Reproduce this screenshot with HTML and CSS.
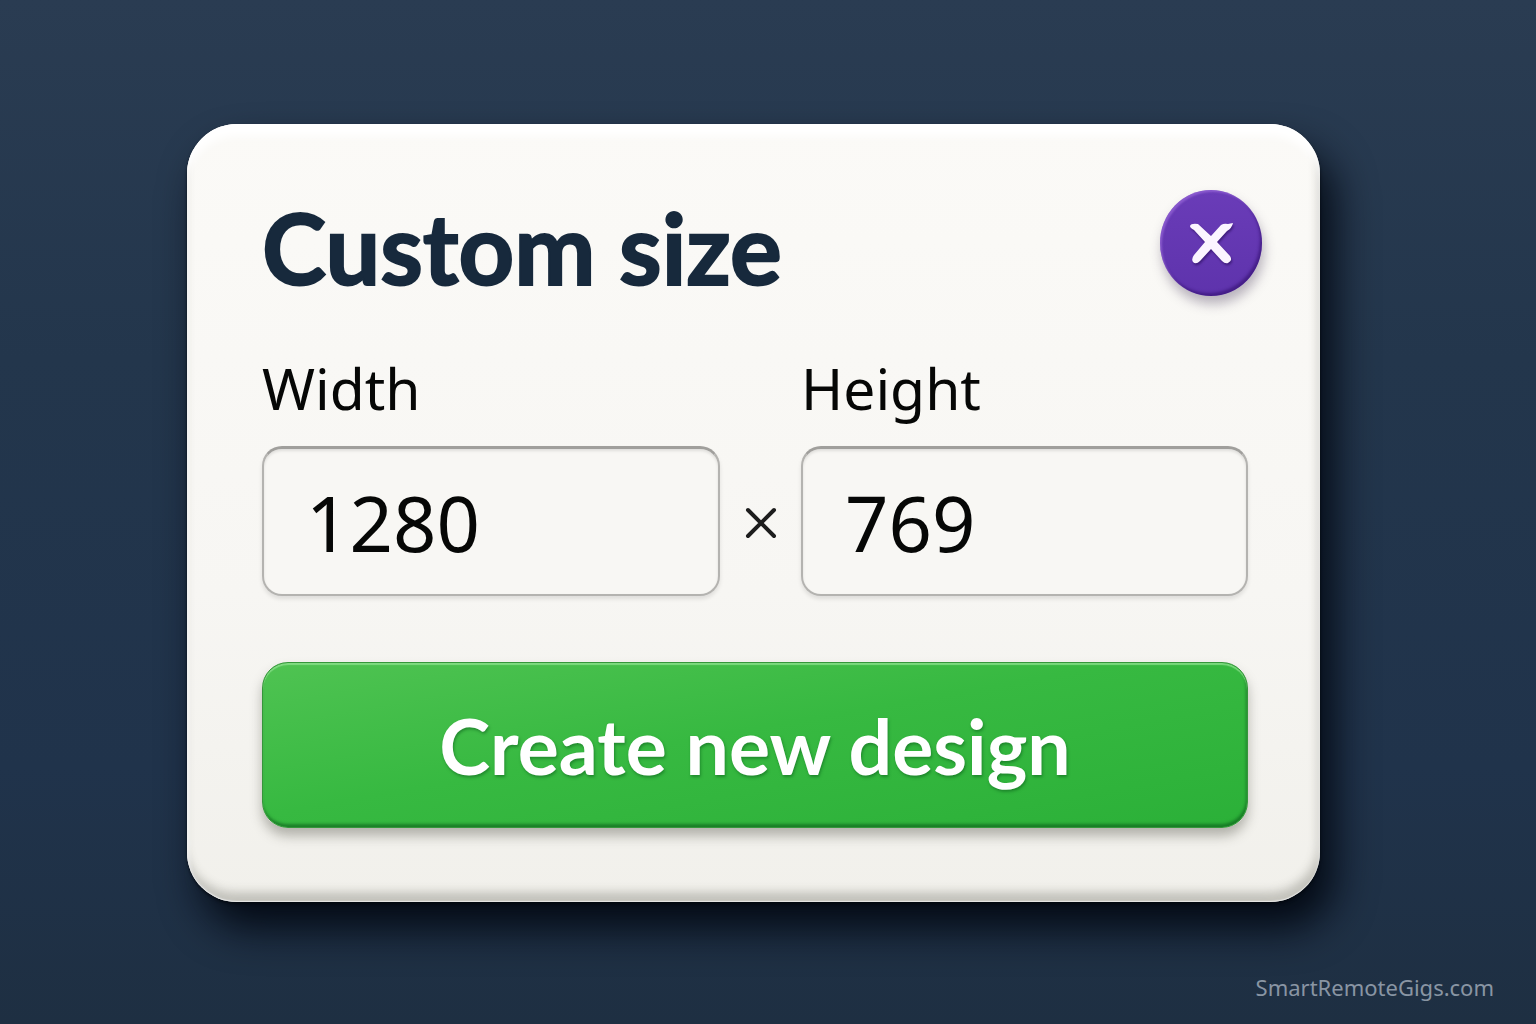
FILE: index.html
```
<!DOCTYPE html>
<html lang="en">
<head>
    <meta charset="UTF-8">
    <meta name="viewport" content="width=device-width, initial-scale=1.0">
    <title>Custom size</title>
    <link rel="stylesheet" href="styles.css">
</head>
<body>
    <main class="page">
        <!-- Custom size dialog -->
        <form class="card">
            <div class="card-header">
                <h1>Custom size</h1>
                <button type="button" class="close-btn" aria-label="Close">
                    <svg viewBox="0 0 48 48" width="48" height="48" aria-hidden="true">
                        <path d="M3 7 Q4 4 11 5 L24 17 L34 6 Q37 4 41 5 L46 4 Q45 9 40 12 L30 23 L43 37 Q46 42 41 44 Q38 45 35 42 L24 30 L13 42 Q9 46 6 43 Q4 40 7 36 L18 23 L7 11 Q3 9 3 7 Z"/>
                    </svg>
                </button>
            </div>

            <div class="fields">
                <label for="width">Width</label>
                <label for="height" class="height-label">Height</label>
                <input type="text" id="width" name="width" value="1280">
                <span class="times">
                    <svg viewBox="0 0 32 32" width="32" height="32" aria-hidden="true">
                        <path d="M3 3 L29 29 M29 3 L3 29"/>
                    </svg>
                </span>
                <input type="text" id="height" name="height" value="769">
            </div>

            <button type="submit" class="create-btn">Create new design</button>
        </form>
    </main>

    <footer>SmartRemoteGigs.com</footer>
</body>
</html>
```

FILE: styles.css
```
/* General Reset */
* {
    box-sizing: border-box;
    margin: 0;
    padding: 0;
}

/* Body Styling */
body {
    min-height: 100vh;
    display: flex;
    flex-direction: column;
    justify-content: space-between;
    font-family: "Noto Sans", "Open Sans", sans-serif;
    color: #060706;
    background: linear-gradient(#2a3c52 0%, #23364c 35%, #20334b 75%, #1e2f42 100%);
}

.page {
    padding: 124px 216px 0 187px;
}

/* Card */
.card {
    padding: 64px 72px 74px 75px;
    border-radius: 50px;
    background: linear-gradient(#fbfaf7, #f7f6f3 60%, #f1f0eb);
    box-shadow:
        inset 0 14px 8px -2px #ffffff,
        inset 0 -1px 1px rgba(255, 255, 255, 0.6),
        inset -2px -10px 10px rgba(90, 90, 80, 0.3),
        inset 2px 0 3px #ffffff,
        0 2px 3px rgba(0, 5, 12, 0.7),
        14px 26px 40px rgba(0, 6, 14, 0.9);
}

.card-header {
    display: flex;
    justify-content: space-between;
    align-items: flex-start;
    margin-right: -14px;
}

h1 {
    font-family: Lato, "Noto Sans", sans-serif;
    font-size: 97px;
    font-weight: 700;
    line-height: 120px;
    color: #17293c;
    -webkit-text-stroke: 2px #17293c;
}

/* Close Button */
.close-btn {
    display: flex;
    align-items: center;
    justify-content: center;
    width: 102px;
    height: 106px;
    margin-top: 2px;
    border: none;
    border-radius: 50%;
    background: linear-gradient(#6a3cb8, #5e33ac);
    box-shadow:
        inset 2px 2px 2px rgba(170, 120, 230, 0.5),
        inset -2px -3px 3px rgba(50, 15, 110, 0.6),
        2px 8px 12px rgba(60, 45, 80, 0.35);
    cursor: pointer;
}

.close-btn svg {
    fill: #fbf5ff;
    filter: drop-shadow(1px 2px 1px rgba(40, 10, 90, 0.6));
}

/* Fields */
.fields {
    display: grid;
    grid-template-columns: 457fr 81px 446fr;
    align-items: center;
    padding-top: 42px;
}

label {
    font-size: 57px;
    line-height: 76px;
}

.height-label {
    grid-column: 3;
}

.fields input {
    width: 100%;
    height: 150px;
    margin-top: 20px;
    padding: 2px 42px 0;
    border: 2px solid #b4b3b0;
    border-top: 3px solid #a09f9c;
    border-radius: 20px;
    background: #f8f7f4;
    box-shadow: inset 0 2px 3px rgba(0, 0, 0, 0.1), 0 3px 4px rgba(0, 0, 0, 0.1);
    font-family: inherit;
    font-size: 76px;
    color: inherit;
}

.times {
    display: flex;
    justify-content: center;
    padding-top: 24px;
}

.times path {
    fill: none;
    stroke: #1d1d1d;
    stroke-width: 4;
    stroke-linecap: round;
}

/* Create Button */
.create-btn {
    display: block;
    width: 100%;
    margin-top: 66px;
    padding: 30px 0;
    border: 1px solid #35963a;
    border-radius: 26px;
    background: linear-gradient(170deg, #4fc352, #37b941 45%, #2bb038);
    box-shadow:
        inset 0 2px 1px rgba(150, 230, 150, 0.7),
        inset -1px -3px 3px rgba(10, 90, 25, 0.6),
        0 8px 12px rgba(60, 60, 50, 0.35);
    font-family: Lato, "Noto Sans", sans-serif;
    font-size: 77px;
    font-weight: 700;
    line-height: 104px;
    color: #ffffff;
    text-shadow: 1px 2px 3px rgba(10, 90, 25, 0.5);
    cursor: pointer;
}

/* Footer */
footer {
    padding: 0 42px 21px 0;
    font-size: 22px;
    line-height: 32px;
    text-align: right;
    color: #8995a3;
}
```
